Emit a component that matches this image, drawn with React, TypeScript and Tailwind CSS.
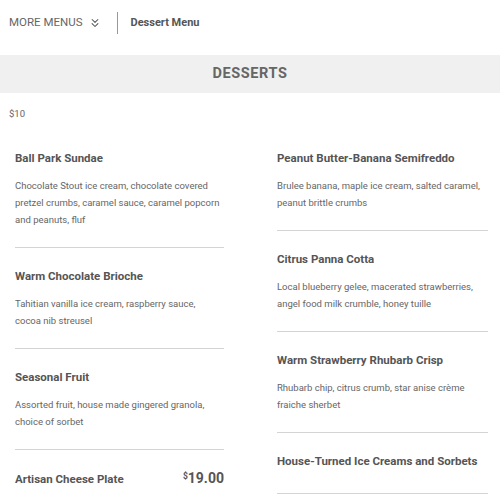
import { ChevronsDown } from 'lucide-react';

type Item = {
  name: string;
  desc?: string;
  price?: string;
};

const leftItems: Item[] = [
  {
    name: 'Ball Park Sundae',
    desc: 'Chocolate Stout ice cream, chocolate covered pretzel crumbs, caramel sauce, caramel popcorn and peanuts, fluf',
  },
  {
    name: 'Warm Chocolate Brioche',
    desc: 'Tahitian vanilla ice cream, raspberry sauce, cocoa nib streusel',
  },
  {
    name: 'Seasonal Fruit',
    desc: 'Assorted fruit, house made gingered granola, choice of sorbet',
  },
  { name: 'Artisan Cheese Plate', price: '19.00' },
];

const rightItems: Item[] = [
  {
    name: 'Peanut Butter-Banana Semifreddo',
    desc: 'Brulee banana, maple ice cream, salted caramel, peanut brittle crumbs',
  },
  {
    name: 'Citrus Panna Cotta',
    desc: 'Local blueberry gelee, macerated strawberries, angel food milk crumble, honey tuille',
  },
  {
    name: 'Warm Strawberry Rhubarb Crisp',
    desc: 'Rhubarb chip, citrus crumb, star anise crème fraiche sherbet',
  },
  { name: 'House-Turned Ice Creams and Sorbets' },
];

function MenuItem({ item }: { item: Item }) {
  return (
    <div className="border-b border-[#d4d4d4] pt-[19px] pb-[19px]">
      <div className="flex items-baseline justify-between">
        <h3 className="whitespace-nowrap text-[11.5px] leading-[18px] font-bold text-[#555]">
          {item.name}
        </h3>
        {item.price && (
          <span className="text-[14px] leading-[18px] font-bold text-[#555]">
            <sup className="text-[8.5px] font-bold">$</sup>
            {item.price}
          </span>
        )}
      </div>
      {item.desc ? (
        <p className="mt-[10px] pr-[3px] text-[9.5px] leading-[17px] text-[#666]">{item.desc}</p>
      ) : (
        <div className="h-[4px]" />
      )}
    </div>
  );
}

export default function App() {
  return (
    <div className="w-[500px] h-[500px] overflow-hidden bg-white font-['Roboto',sans-serif]">
      <div className="flex h-[46px] items-center pl-[9px]">
        <span className="text-[11.5px] text-[#666]">MORE MENUS</span>
        <ChevronsDown className="ml-[5px] h-[14px] w-[14px] text-[#555]" strokeWidth={1.8} />
        <div className="ml-[15px] h-[22px] w-px bg-[#999]" />
        <span className="ml-[13px] text-[11px] font-bold text-[#555]">Dessert Menu</span>
      </div>
      <div className="mt-[9px] flex h-[38px] items-center justify-center bg-[#f0f0f0]">
        <h2 className="text-[14.5px] font-bold tracking-[0.6px] text-[#666]">DESSERTS</h2>
      </div>
      <div className="pl-[9px] pt-[14px] text-[9.5px] leading-[14px] text-[#666]">$10</div>
      <div className="mt-[9px] flex gap-[53px] pl-[15px] pr-[12px]">
        <div className="flex w-[209px] flex-col">
          {leftItems.map((item) => (
            <MenuItem key={item.name} item={item} />
          ))}
        </div>
        <div className="flex flex-1 flex-col">
          {rightItems.map((item) => (
            <MenuItem key={item.name} item={item} />
          ))}
        </div>
      </div>
    </div>
  );
}
